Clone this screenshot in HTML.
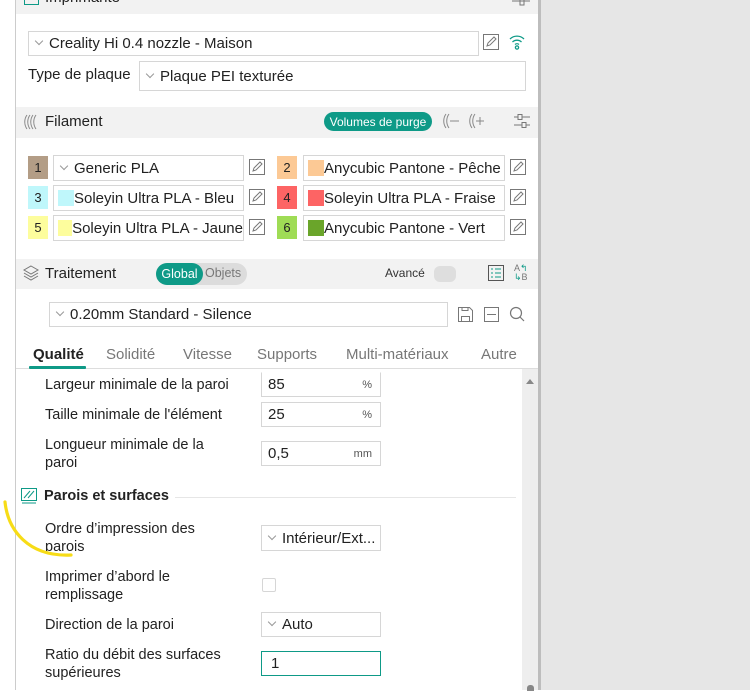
<!DOCTYPE html>
<html><head><meta charset="utf-8"><style>
*{box-sizing:border-box;margin:0;padding:0}
body{width:750px;height:690px;overflow:hidden;background:#fff;font-family:"Liberation Sans",sans-serif;color:#222;position:relative}
.a{position:absolute}
.hdr{position:absolute;left:16px;width:522px;background:#f2f2f2}
.box{position:absolute;border:1px solid #d6d6d6;background:#fff;font-size:15px;display:flex;align-items:center;padding-left:6px;white-space:nowrap;overflow:hidden}
.chev{display:inline-block;width:9px;height:6px;margin-right:5px;margin-top:1px;background:none;position:relative}
.chev:before{content:"";position:absolute;left:1px;top:-3px;width:5px;height:5px;border-right:1px solid #999;border-bottom:1px solid #999;transform:rotate(45deg)}
.badge{position:absolute;width:20px;height:23px;font-size:13px;display:flex;align-items:center;justify-content:center}
.sw{display:inline-block;width:16px;height:16px;margin-right:0}
.lbl{position:absolute;left:45px;font-size:14.5px;line-height:18px;color:#222}
.unit{position:absolute;right:8px;font-size:11px;color:#555}
.tab{position:absolute;top:345px;font-size:15px;color:#777}
</style></head><body>
<div class="a" style="left:15px;top:0;width:1px;height:690px;background:#ccc"></div>
<div class="a" style="left:538px;top:0;width:3px;height:690px;background:#bdbdbd"></div>
<div class="a" style="left:541px;top:0;width:209px;height:690px;background:#e6e6e6"></div>

<div class="hdr" style="top:0;height:14px"></div>
<div class="a" style="left:24px;top:-6px;width:15px;height:11px;border:1.5px solid #0e9a87"></div>
<div class="a" style="left:45px;top:-11px;font-size:15px">Imprimante</div>
<svg class="a" style="left:512px;top:-4px" width="18" height="10"><path d="M0 5H18M8 1v8h4V1z" stroke="#777" fill="none"/></svg>

<div class="box" style="left:28px;top:31px;width:451px;height:25px"><span class="chev"></span>Creality Hi 0.4 nozzle - Maison</div>
<svg class="a" style="left:483px;top:34px" width="16" height="16"><rect x="0.5" y="0.5" width="15" height="15" fill="none" stroke="#777"/><path d="M4 12l1-3 6-6 2 2-6 6z" fill="none" stroke="#777"/></svg>
<svg class="a" style="left:509px;top:33px" width="16" height="17" fill="none" stroke="#0e9a87" stroke-width="1.3"><path d="M1 6a10 10 0 0 1 14 0M3.5 9a6.5 6.5 0 0 1 9 0M6 11.5a3 3 0 0 1 4 0"/><circle cx="8" cy="14.5" r="1.6"/></svg>
<div class="a" style="left:28px;top:66px;font-size:15px">Type de plaque</div>
<div class="box" style="left:139px;top:61px;width:387px;height:30px"><span class="chev"></span>Plaque PEI texturée</div>

<div class="hdr" style="top:107px;height:31px"></div>
<svg class="a" style="left:23px;top:114px" width="16" height="16" fill="none" stroke="#888"><path d="M4 1C1 5 1 11 4 15M7 1C4 5 4 11 7 15M10 1C7 5 7 11 10 15M13 1C10 5 10 11 13 15"/></svg>
<div class="a" style="left:45px;top:113px;font-size:15px">Filament</div>
<div class="a" style="left:324px;top:112px;width:108px;height:19px;border-radius:10px;background:#0e9a87;color:#fff;font-size:12px;display:flex;align-items:center;justify-content:center">Volumes de purge</div>
<svg class="a" style="left:442px;top:113px" width="18" height="16" fill="none" stroke="#888"><path d="M4 1C1 5 1 11 4 15M7 1C4 5 4 11 7 15M8 8h9"/></svg>
<svg class="a" style="left:468px;top:113px" width="18" height="16" fill="none" stroke="#888"><path d="M4 1C1 5 1 11 4 15M7 1C4 5 4 11 7 15M8 8h8M12 4v8"/></svg>
<svg class="a" style="left:514px;top:113px" width="16" height="16" stroke="#777" fill="none"><path d="M0 4h16M0 12h16"/><rect x="4" y="1.5" width="4" height="5" fill="#f2f2f2"/><rect x="8" y="9.5" width="4" height="5" fill="#f2f2f2"/></svg>

<div class="badge" style="left:28px;top:156px;background:#b39d86">1</div>
<div class="box" style="left:53px;top:155px;width:191px;height:26px"><span class="chev"></span>Generic PLA</div>
<div class="badge" style="left:277px;top:156px;background:#fcc995">2</div>
<div class="box" style="left:303px;top:155px;width:202px;height:26px;padding-left:4px"><span class="sw" style="background:#fcc995"></span>Anycubic Pantone - Pêche</div>
<div class="badge" style="left:28px;top:186px;background:#bff7fb">3</div>
<div class="box" style="left:53px;top:185px;width:191px;height:26px;padding-left:4px"><span class="sw" style="background:#bff7fb"></span>Soleyin Ultra PLA - Bleu</div>
<div class="badge" style="left:277px;top:186px;background:#fd6464">4</div>
<div class="box" style="left:303px;top:185px;width:202px;height:26px;padding-left:4px"><span class="sw" style="background:#fd6464"></span>Soleyin Ultra PLA - Fraise</div>
<div class="badge" style="left:28px;top:216px;background:#fdfd9d">5</div>
<div class="box" style="left:53px;top:215px;width:191px;height:26px;padding-left:4px"><span class="sw" style="background:#fdfd9d"></span>Soleyin Ultra PLA - Jaune</div>
<div class="badge" style="left:277px;top:216px;background:#9fdc55">6</div>
<div class="box" style="left:303px;top:215px;width:202px;height:26px;padding-left:4px"><span class="sw" style="background:#6aa52a"></span>Anycubic Pantone - Vert</div>
<svg class="a" style="left:249px;top:159px" width="16" height="16"><rect x="0.5" y="0.5" width="15" height="15" fill="none" stroke="#777"/><path d="M4 12l1-3 6-6 2 2-6 6z" fill="none" stroke="#777"/></svg>
<svg class="a" style="left:249px;top:189px" width="16" height="16"><rect x="0.5" y="0.5" width="15" height="15" fill="none" stroke="#777"/><path d="M4 12l1-3 6-6 2 2-6 6z" fill="none" stroke="#777"/></svg>
<svg class="a" style="left:249px;top:219px" width="16" height="16"><rect x="0.5" y="0.5" width="15" height="15" fill="none" stroke="#777"/><path d="M4 12l1-3 6-6 2 2-6 6z" fill="none" stroke="#777"/></svg>
<svg class="a" style="left:510px;top:159px" width="16" height="16"><rect x="0.5" y="0.5" width="15" height="15" fill="none" stroke="#777"/><path d="M4 12l1-3 6-6 2 2-6 6z" fill="none" stroke="#777"/></svg>
<svg class="a" style="left:510px;top:189px" width="16" height="16"><rect x="0.5" y="0.5" width="15" height="15" fill="none" stroke="#777"/><path d="M4 12l1-3 6-6 2 2-6 6z" fill="none" stroke="#777"/></svg>
<svg class="a" style="left:510px;top:219px" width="16" height="16"><rect x="0.5" y="0.5" width="15" height="15" fill="none" stroke="#777"/><path d="M4 12l1-3 6-6 2 2-6 6z" fill="none" stroke="#777"/></svg>

<div class="hdr" style="top:259px;height:30px"></div>
<svg class="a" style="left:23px;top:265px" width="16" height="16" fill="none" stroke="#777"><path d="M8 1l7 4-7 4-7-4z M1 8l7 4 7-4 M1 11l7 4 7-4"/></svg>
<div class="a" style="left:45px;top:265px;font-size:15px">Traitement</div>
<div class="a" style="left:156px;top:263px;width:91px;height:22px;border-radius:11px;background:#dcdcdc"></div>
<div class="a" style="left:156px;top:263px;width:47px;height:22px;border-radius:11px;background:#0e9a87;color:#fff;font-size:12.5px;display:flex;align-items:center;justify-content:center">Global</div>
<div class="a" style="left:205px;top:266px;font-size:12.5px;color:#777">Objets</div>
<div class="a" style="left:385px;top:266px;font-size:12px;color:#333">Avancé</div>
<div class="a" style="left:434px;top:266px;width:22px;height:16px;border-radius:6px;background:#dedede"></div>
<svg class="a" style="left:488px;top:265px" width="16" height="16" fill="none" stroke="#555"><rect x="0.5" y="0.5" width="15" height="15"/><path d="M3 4h2M7 4h6M3 8h2M7 8h6M3 12h2M7 12h6" stroke="#0e9a87"/></svg>
<div class="a" style="left:514px;top:264px;font-size:9px;color:#777;line-height:9px">A<span style="color:#0e9a87">↰</span><br><span style="color:#0e9a87">↳</span>B</div>

<div class="box" style="left:49px;top:302px;width:399px;height:25px"><span class="chev"></span>0.20mm Standard - Silence</div>
<svg class="a" style="left:458px;top:307px" width="15" height="15" fill="none" stroke="#777"><path d="M.5 .5h11l3 3v11H.5z M3.5 14.5v-5h8v5 M4 .5v3h6v-3"/></svg>
<svg class="a" style="left:484px;top:307px" width="15" height="15" fill="none" stroke="#777"><rect x=".5" y=".5" width="14" height="14"/><path d="M3 7.5h9"/></svg>
<svg class="a" style="left:509px;top:306px" width="16" height="16" fill="none" stroke="#777" stroke-width="1.2"><circle cx="7" cy="7" r="5.5"/><path d="M11 11l4 4"/></svg>

<div class="tab" style="left:33px;top:346px;color:#222;font-weight:bold">Qualité</div>
<div class="tab" style="left:106px;top:346px">Solidité</div>
<div class="tab" style="left:183px;top:346px">Vitesse</div>
<div class="tab" style="left:257px;top:346px">Supports</div>
<div class="tab" style="left:346px;top:346px">Multi-matériaux</div>
<div class="tab" style="left:481px;top:346px">Autre</div>
<div class="a" style="left:16px;top:368px;width:522px;height:1px;background:#ddd"></div>
<div class="a" style="left:29px;top:366px;width:57px;height:3px;background:#0e9a87;border-radius:1px"></div>

<div class="a" style="left:522px;top:369px;width:16px;height:321px;background:#eeeeee"></div>
<div class="a" style="left:526px;top:379px;width:0;height:0;border-left:4px solid transparent;border-right:4px solid transparent;border-bottom:5px solid #888"></div>
<div class="a" style="left:527px;top:685px;width:7px;height:6px;border-radius:3px 3px 0 0;background:#888"></div>

<div class="lbl" style="top:376px">Largeur minimale de la paroi</div>
<div class="box" style="left:261px;top:372px;width:120px;height:25px;border-top-color:#fff">85<span class="unit">%</span></div>
<div class="lbl" style="top:406px">Taille minimale de l'élément</div>
<div class="box" style="left:261px;top:402px;width:120px;height:25px">25<span class="unit">%</span></div>
<div class="lbl" style="top:436px">Longueur minimale de la<br>paroi</div>
<div class="box" style="left:261px;top:441px;width:120px;height:25px">0,5<span class="unit">mm</span></div>

<svg class="a" style="left:21px;top:488px" width="16" height="16" fill="none" stroke="#0e9a87"><rect x=".5" y=".5" width="15" height="12"/><path d="M3 10l6-7M7 10l6-7M1 15h14"/></svg>
<div class="a" style="left:44px;top:488px;font-size:14.5px;font-weight:bold">Parois et surfaces</div>
<div class="a" style="left:175px;top:497px;width:341px;height:1px;background:#e6e6e6"></div>

<div class="lbl" style="top:520px">Ordre d’impression des<br>parois</div>
<div class="box" style="left:261px;top:525px;width:120px;height:26px"><span class="chev"></span>Intérieur/Ext...</div>
<div class="lbl" style="top:568px">Imprimer d’abord le<br>remplissage</div>
<div class="a" style="left:262px;top:578px;width:14px;height:14px;border:1px solid #d6d6d6;border-radius:2px"></div>
<div class="lbl" style="top:616px">Direction de la paroi</div>
<div class="box" style="left:261px;top:612px;width:120px;height:25px"><span class="chev"></span>Auto</div>
<div class="lbl" style="top:646px">Ratio du débit des surfaces<br>supérieures</div>
<div class="box" style="left:261px;top:651px;width:120px;height:25px;border-color:#0e9a87;padding-left:9px">1</div>

<svg class="a" style="left:0;top:495px" width="80" height="70"><path d="M5 7C8 35 28 62 71 60" fill="none" stroke="#f7dc16" stroke-width="3.2" stroke-linecap="round"/></svg>
</body></html>
